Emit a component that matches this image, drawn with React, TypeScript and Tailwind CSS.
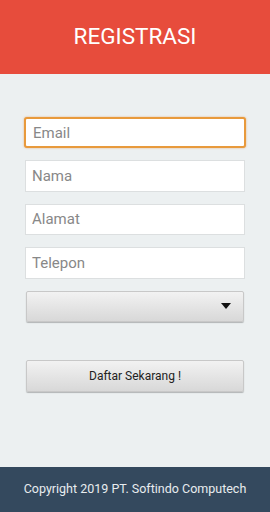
import React from 'react';

const font = { fontFamily: 'Roboto, "Liberation Sans", sans-serif' };

export default function App() {
  return (
    <div className="w-[270px] h-[512px] flex flex-col bg-[#ecf0f1]" style={font}>
      {/* Header */}
      <div className="h-[74px] bg-[#e74c3c] flex items-center justify-center">
        <h1 className="text-[22.5px] text-white">REGISTRASI</h1>
      </div>

      {/* Form */}
      <div className="flex-1 flex flex-col px-[24px] pt-[43px]">
        <input
          placeholder="Email"
          className="h-[31px] w-full bg-white border-2 border-[#e89a3c] rounded-[3px] px-[7px] text-[15px] text-[#555] placeholder:text-[#888] outline-none shadow-[0_0_2px_rgba(230,126,34,0.6)]"
        />
        <div className="flex flex-col gap-[12px] mt-[12px] px-[1px]">
          {['Nama', 'Alamat', 'Telepon'].map((p) => (
            <input
              key={p}
              placeholder={p}
              className="h-[31.5px] w-full bg-white border border-[#dcdfe0] px-[6px] text-[15px] text-[#555] placeholder:text-[#888] outline-none"
            />
          ))}
        </div>
        <div className="mt-[12px] mx-[2px] h-[31px] rounded-[2px] bg-gradient-to-b from-[#f2f2f2] to-[#d8d8d8] border border-[#c8c8c8] shadow-[0_1px_1px_rgba(0,0,0,0.25)] flex items-center justify-end pr-[12px]">
          <svg width="10" height="6" viewBox="0 0 10 6">
            <path d="M0 0 L10 0 L5 6 Z" fill="#111" />
          </svg>
        </div>
        <button className="mt-[38px] mx-[2px] h-[32px] rounded-[2px] bg-gradient-to-b from-[#f2f2f2] to-[#d8d8d8] border border-[#c8c8c8] shadow-[0_1px_1px_rgba(0,0,0,0.25)] text-[12px] text-[#222]">
          Daftar Sekarang !
        </button>
      </div>

      {/* Footer */}
      <div className="h-[45px] bg-[#34495e] flex items-center justify-center">
        <span className="text-[12.5px] text-[#e8ecef]">Copyright 2019 PT. Softindo Computech</span>
      </div>
    </div>
  );
}
